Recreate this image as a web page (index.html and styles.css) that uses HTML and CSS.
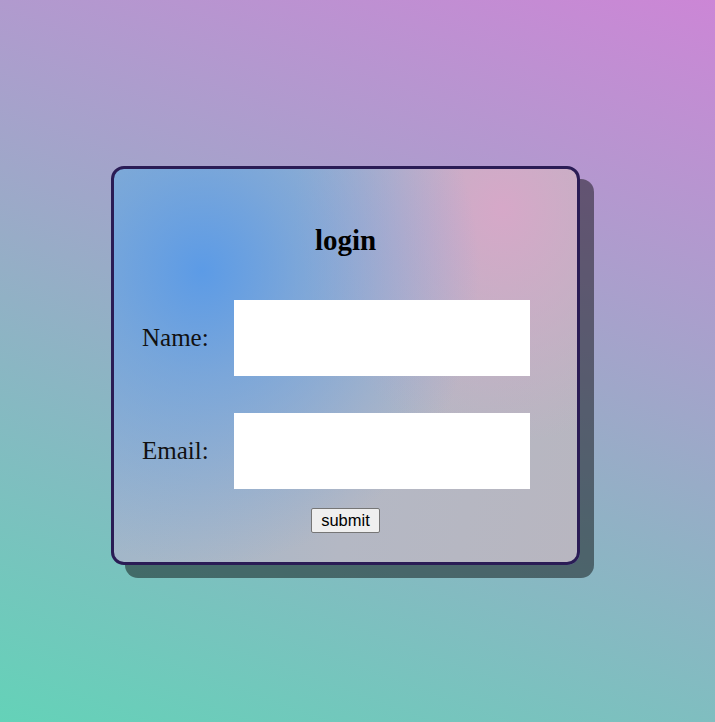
FILE: index.html
```html
<!DOCTYPE html>
<html>
<head>
<meta charset="utf-8">
<link rel="stylesheet" href="styles.css">
</head>
<body>
  <div class="card">
    <h1 class="title">login</h1>
    <form class="form">
      <label class="label" for="name">Name:</label>
      <input class="field" id="name" type="text">
      <label class="label" for="email">Email:</label>
      <input class="field" id="email" type="text">
    </form>
    <div class="actions"><button class="submit" type="button">submit</button></div>
  </div>
</body>
</html>
```
FILE: styles.css
```css
html, body {
  margin: 0;
  padding: 0;
}
body {
  width: 715px;
  height: 722px;
  overflow: hidden;
  background: linear-gradient(20deg, #64d2b8 0%, #cc86d6 100%);
  font-family: "Liberation Serif", "Times New Roman", serif;
}
.card {
  box-sizing: border-box;
  margin: 166px 0 0 111px;
  width: 469px;
  height: 399px;
  border: 3px solid #2a1c55;
  border-radius: 13px;
  box-shadow: 14px 13px 0 rgba(0, 0, 0, 0.45);
  background:
    radial-gradient(ellipse 60% 75% at 19% 26%, rgba(92, 155, 230, 1) 0%, rgba(92, 155, 230, 0.6) 35%, rgba(92, 155, 230, 0) 100%),
    radial-gradient(ellipse 45% 60% at 84% 10%, rgba(214, 168, 200, 1) 0%, rgba(214, 168, 200, 0) 100%),
    linear-gradient(100deg, #9cb6ca 0%, #b4b8c4 55%, #b8b6c0 100%);
}
.title {
  margin: 55px 0 0;
  text-align: center;
  font-size: 29px;
  font-weight: bold;
  line-height: 33px;
  color: #000;
}
.form {
  margin: 43px 0 0 28px;
  display: grid;
  grid-template-columns: 66px 296px;
  column-gap: 26px;
  row-gap: 37px;
  align-items: center;
}
.label {
  font-size: 25px;
  color: #111;
  white-space: nowrap;
}
.field {
  box-sizing: border-box;
  width: 296px;
  height: 76px;
  border: none;
  margin: 0;
  padding: 0 8px;
  background: #fff;
  outline: none;
}
.actions {
  margin-top: 19px;
  text-align: center;
}
.submit {
  box-sizing: border-box;
  height: 25px;
  width: 69px;
  padding: 0;
  font-family: "Liberation Sans", Arial, sans-serif;
  font-size: 16.5px;
  color: #000;
  background: #efefef;
  border: 1px solid #767676;
  border-radius: 2px;
}
```
